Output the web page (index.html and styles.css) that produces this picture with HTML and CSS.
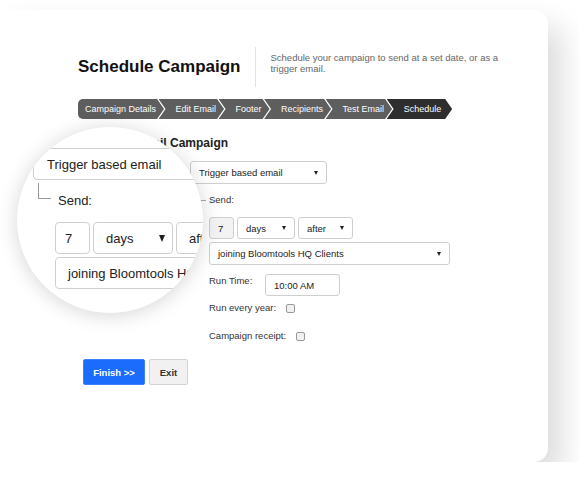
FILE: index.html
```html
<!DOCTYPE html>
<html lang="en">
<head>
    <meta charset="UTF-8">
    <meta name="viewport" content="width=device-width, initial-scale=1.0">
    <title>Schedule Campaign</title>
    <link rel="stylesheet" href="styles.css">
</head>
<body>
    <div class="card">
        <div class="header">
            <h1>Schedule Campaign</h1>
            <div class="divider"></div>
            <p class="desc">Schedule your campaign to send at a set date, or as a trigger email.</p>
        </div>

        <div class="steps">
            <span class="step first">Campaign Details</span>
            <span class="step">Edit Email</span>
            <span class="step">Footer</span>
            <span class="step">Recipients</span>
            <span class="step">Test Email</span>
            <span class="step current">Schedule</span>
        </div>

        <div class="form">
            <h2>Schedule Email Campaign</h2>
            <div class="type-row">
                <div class="select type-select">Trigger based email <i class="caret"></i></div>
            </div>

            <div class="sub">
                <div class="send-row">
                    <span class="tree"></span>
                    <span>Send:</span>
                </div>
                <div class="inline-row">
                    <div class="input num">7</div>
                    <div class="select days">days <i class="caret"></i></div>
                    <div class="select after">after <i class="caret"></i></div>
                </div>
                <div class="select target">joining Bloomtools HQ Clients <i class="caret"></i></div>

                <div class="time-row">
                    <label>Run Time:</label>
                    <div class="input time">10:00 AM</div>
                </div>
                <div class="check-row">
                    <label>Run every year:</label>
                    <span class="checkbox"></span>
                </div>
                <div class="check-row receipt">
                    <label>Campaign receipt:</label>
                    <span class="checkbox"></span>
                </div>
            </div>
        </div>

        <div class="actions">
            <button class="btn finish">Finish &gt;&gt;</button>
            <button class="btn exit">Exit</button>
        </div>

        <!-- magnifier over the left part of the form -->
        <div class="lens">
            <div class="lens-select">Trigger based email</div>
            <div class="lens-send">
                <span class="lens-tree"></span>
                <span class="lens-send-label">Send:</span>
            </div>
            <div class="lens-row">
                <div class="lens-box lens-num">7</div>
                <div class="lens-box lens-days">days <i class="lens-caret"></i></div>
                <div class="lens-box lens-after">after</div>
            </div>
            <div class="lens-box lens-target">joining Bloomtools HQ Clients</div>
        </div>
    </div>
</body>
</html>
```

FILE: styles.css
```css
body {
    margin: 0;
    padding: 0;
    background: #fff;
    font-family: "Liberation Sans", Arial, sans-serif;
    color: #333;
}

.card {
    position: relative;
    box-sizing: border-box;
    width: 548px;
    height: 452px;
    margin-top: 10px;
    padding: 37px 0 0 78px;
    background: #fff;
    border-radius: 0 14px 14px 0;
    box-shadow: 14px 16px 30px rgba(0, 0, 0, 0.14);
}

/* header */
.header {
    display: flex;
    align-items: center;
    height: 40px;
}

h1 {
    margin: 0;
    font-size: 17px;
    font-weight: bold;
    color: #111;
    white-space: nowrap;
}

.divider {
    width: 1px;
    height: 40px;
    background: #e2e2e2;
    margin: 0 14px 0 15px;
}

.desc {
    margin: 0 0 8px;
    width: 240px;
    font-size: 9.5px;
    line-height: 11px;
    color: #666;
}

/* steps */
.steps {
    display: flex;
    margin-top: 12px;
    height: 20px;
}

.step {
    display: flex;
    align-items: center;
    height: 20px;
    padding: 0 8px 0 17px;
    margin-left: -5.5px;
    background: #5e5e5e;
    color: #fff;
    font-size: 9px;
    white-space: nowrap;
    clip-path: polygon(0 0, calc(100% - 7px) 0, 100% 50%, calc(100% - 7px) 100%, 0 100%, 7px 50%);
}

.step.first {
    margin-left: 0;
    padding-left: 7px;
    border-radius: 5px 0 0 5px;
    clip-path: polygon(0 0, calc(100% - 7px) 0, 100% 50%, calc(100% - 7px) 100%, 0 100%);
}

.step.current {
    background: #2e2e2e;
    padding-right: 11px;
}

/* form */
.form {
    font-size: 9.5px;
    color: #333;
}

h2 {
    margin: 17px 0 0;
    font-size: 12px;
    line-height: 14px;
    color: #222;
}

.type-row {
    margin: 11px 0 0 112px;
}

.select, .input {
    box-sizing: border-box;
    display: flex;
    align-items: center;
    flex-shrink: 0;
    height: 23px;
    padding: 0 8px;
    border: 1px solid #cfcfcf;
    border-radius: 3px;
    background: #fff;
    color: #222;
}

.select {
    justify-content: space-between;
}

.caret {
    width: 0;
    height: 0;
    border-left: 2.5px solid transparent;
    border-right: 2.5px solid transparent;
    border-top: 4px solid #222;
}

.type-select {
    width: 137px;
}

.sub {
    margin-left: 131px;
}

.send-row {
    position: relative;
    margin-top: 9px;
    line-height: 14px;
}

.tree {
    position: absolute;
    left: -15px;
    top: -8px;
    width: 11px;
    height: 15px;
    border-left: 1px solid #aaa;
    border-bottom: 1px solid #aaa;
}

.inline-row {
    display: flex;
    gap: 3px;
    margin-top: 10px;
}

.inline-row .select, .inline-row .input {
    height: 22px;
}

.num {
    width: 25px;
    background: #f3f3f3;
}

.days {
    width: 58px;
}

.after {
    width: 55px;
}

.target {
    width: 241px;
    margin-top: 3px;
}

.time-row {
    display: flex;
    align-items: flex-start;
    margin-top: 9px;
}

.time-row label {
    width: 56px;
    line-height: 14px;
}

.time {
    width: 75px;
    height: 22px;
}

.check-row {
    display: flex;
    align-items: center;
    margin-top: 5px;
    line-height: 14px;
}

.check-row.receipt {
    margin-top: 14px;
}

.checkbox {
    box-sizing: border-box;
    width: 9px;
    height: 9px;
    margin-left: 10px;
    border: 1px solid #999;
    border-radius: 2px;
    background: #f1f1f1;
}

/* buttons */
.actions {
    display: flex;
    gap: 4px;
    margin: 16px 0 0 5px;
}

.btn {
    box-sizing: border-box;
    height: 26px;
    font-family: "Liberation Sans", Arial, sans-serif;
    font-size: 9.5px;
    font-weight: bold;
    border-radius: 2px;
    cursor: pointer;
}

.finish {
    width: 62px;
    background: #1b6cfd;
    border: 1px solid #3e80ff;
    color: #fff;
}

.exit {
    width: 39px;
    background: #f1f1f1;
    border: 1px solid #d3d3d3;
    color: #333;
}

/* magnifier */
.lens {
    position: absolute;
    left: 17px;
    top: 117px;
    width: 186px;
    height: 186px;
    box-sizing: border-box;
    padding: 21px 0 0 16px;
    border-radius: 50%;
    overflow: hidden;
    background: #fff;
    box-shadow: 0 2px 20px rgba(0, 0, 0, 0.17);
    font-size: 13px;
    color: #222;
}

.lens-select {
    box-sizing: border-box;
    display: flex;
    align-items: center;
    flex-shrink: 0;
    width: 260px;
    height: 32px;
    padding-left: 13px;
    border: 1px solid #cfcfcf;
    border-radius: 4px;
    white-space: nowrap;
}

.lens-send {
    display: flex;
    align-items: flex-start;
    margin-top: 3px;
    margin-left: 5px;
}

.lens-tree {
    width: 12px;
    height: 15px;
    border-left: 1px solid #999;
    border-bottom: 1px solid #999;
}

.lens-send-label {
    margin: 9px 0 0 7px;
    line-height: 18px;
}

.lens-row {
    display: flex;
    gap: 3px;
    margin: 12px 0 0 22px;
}

.lens-box {
    box-sizing: border-box;
    display: flex;
    align-items: center;
    flex-shrink: 0;
    height: 32px;
    padding: 0 12px;
    border: 1px solid #cfcfcf;
    border-radius: 4px;
    white-space: nowrap;
}

.lens-num {
    width: 35px;
    padding-left: 9px;
}

.lens-days {
    width: 80px;
    justify-content: space-between;
    padding-right: 7px;
}

.lens-after {
    width: 80px;
}

.lens-caret {
    width: 0;
    height: 0;
    border-left: 3.5px solid transparent;
    border-right: 3.5px solid transparent;
    border-top: 7px solid #222;
}

.lens-target {
    width: 260px;
    margin: 3px 0 0 22px;
}
```
